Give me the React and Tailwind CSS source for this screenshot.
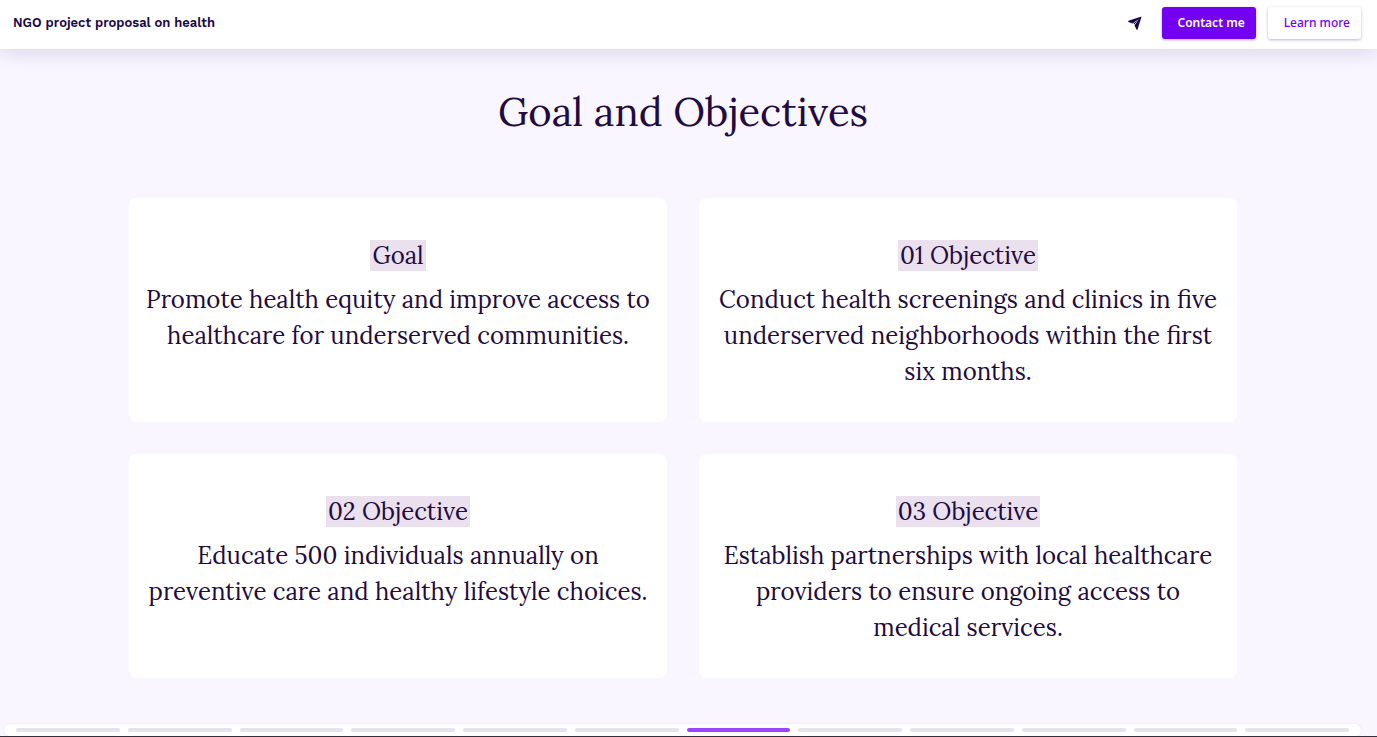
const cards = [
  { label: 'Goal', text: 'Promote health equity and improve access to healthcare for underserved communities.' },
  { label: '01 Objective', text: 'Conduct health screenings and clinics in five underserved neighborhoods within the first six months.' },
  { label: '02 Objective', text: 'Educate 500 individuals annually on preventive care and healthy lifestyle choices.' },
  { label: '03 Objective', text: 'Establish partnerships with local healthcare providers to ensure ongoing access to medical services.' }
];

const slideCount = 12;
const currentSlide = 6;

function Header() {
  return (
    <header className="relative flex h-[49px] items-center justify-between bg-white pl-[13px] pr-4 pb-1 shadow-[0_4px_20px_rgba(33,11,75,0.14)]">
      <div className="font-['Work_Sans','Inter',sans-serif] text-[13px] font-semibold text-[#190a45]">
        NGO project proposal on health
      </div>
      <div className="flex items-center font-['Noto_Sans',sans-serif] text-xs">
        <button type="button" aria-label="Share" className="mr-5">
          <svg viewBox="0 0 14 14" className="h-[14px] w-[14px]" fill="#190a45">
            <path d="M13.6.4.3 4.8v1.1l4.3 1.5L10.4 3.4 6.5 9.2l2 4.6h1z" />
            <path d="M4.6 7.4 10.4 3.4 6.5 9.2z" fill="#fff" />
            <path d="M5.4 7.6 10.4 3.4 6.4 8.6z" />
          </svg>
        </button>
        <button type="button" className="mr-3 h-8 rounded-[3px] bg-[#7300f0] pl-4 pr-[11px] font-semibold text-white shadow-[0_1px_3px_rgba(33,11,75,0.35)]">
          Contact me
        </button>
        <button type="button" className="h-8 rounded-[3px] bg-white pl-4 pr-[11px] font-medium text-[#7300f0] shadow-[0_1px_3px_rgba(33,11,75,0.3)]">
          Learn more
        </button>
      </div>
    </header>
  );
}

export default function App() {
  return (
    <div className="flex min-h-screen flex-col bg-[#f9f6ff] font-['Lora','Liberation_Serif',serif] text-[#210b40]">
      <Header />

      <main className="flex-1 pl-[129px] pr-[140px] pt-[33px] pb-[46px] text-center">
        <h1 className="mb-14 text-[40px] leading-[60px]">Goal and Objectives</h1>
        <div className="grid grid-cols-2 gap-8">
          {cards.map(({ label, text }) => (
            <section key={label} className="min-h-56 rounded-lg bg-white px-4 pt-10 pb-8 text-2xl leading-9">
              <h2 className="mb-2">
                <span className="bg-[#eae0ee] px-0.5">{label}</span>
              </h2>
              <p>{text}</p>
            </section>
          ))}
        </div>
      </main>

      {/* Slide progress */}
      <footer className="border-b border-[#34303e] pl-1 pr-4">
        <div className="flex gap-2 rounded-full bg-white px-3 py-1 shadow-[0_0_2px_rgba(33,11,75,0.1)]">
          {Array.from({ length: slideCount }).map((_, i) => (
            <div key={i} className={`h-1 flex-1 rounded-sm ${i === currentSlide ? 'bg-[#9747ff]' : 'bg-[#e5e4eb]'}`} />
          ))}
        </div>
      </footer>
    </div>
  );
}
